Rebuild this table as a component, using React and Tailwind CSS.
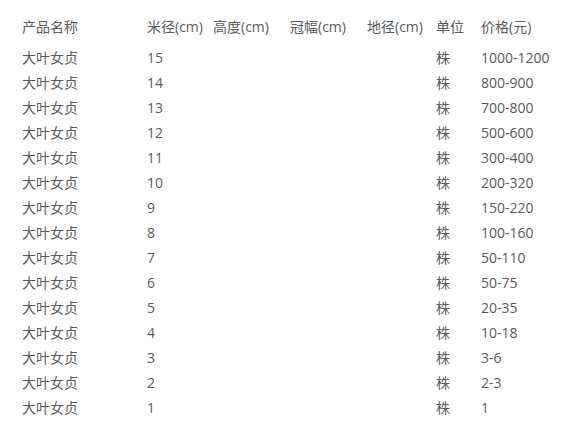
import React from 'react';

const rows = [
  ['15', '1000-1200'],
  ['14', '800-900'],
  ['13', '700-800'],
  ['12', '500-600'],
  ['11', '300-400'],
  ['10', '200-320'],
  ['9', '150-220'],
  ['8', '100-160'],
  ['7', '50-110'],
  ['6', '50-75'],
  ['5', '20-35'],
  ['4', '10-18'],
  ['3', '3-6'],
  ['2', '2-3'],
  ['1', '1'],
];

const cols = 'grid grid-cols-[125px_66px_77px_77px_69px_45px_1fr]';

export default function App() {
  return (
    <div
      className="w-[585px] h-[432px] bg-white pl-[22px] pt-[14px] text-[14px] text-[#5a5a5a] overflow-hidden"
      style={{ fontFamily: '"Open Sans", "Noto Sans CJK SC", sans-serif' }}
    >
      <div className={`${cols} h-[31px] leading-[25px]`}>
        <span>产品名称</span>
        <span>米径(cm)</span>
        <span>高度(cm)</span>
        <span>冠幅(cm)</span>
        <span>地径(cm)</span>
        <span>单位</span>
        <span>价格(元)</span>
      </div>
      {rows.map(([d, price]) => (
        <div key={d} className={`${cols} leading-[25px]`}>
          <span>大叶女贞</span>
          <span>{d}</span>
          <span></span>
          <span></span>
          <span></span>
          <span>株</span>
          <span>{price}</span>
        </div>
      ))}
    </div>
  );
}
